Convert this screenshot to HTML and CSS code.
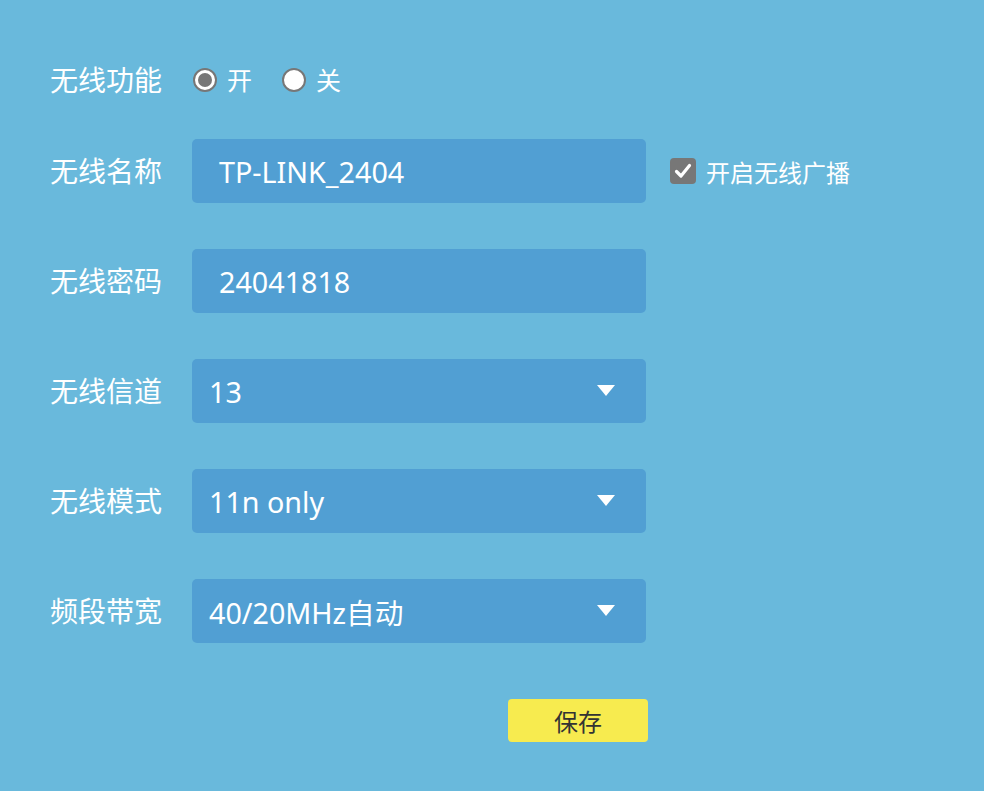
FILE: index.html
```html
<!DOCTYPE html>
<html lang="zh-CN">
<head>
<meta charset="utf-8">
<title>无线设置</title>
<link rel="stylesheet" href="styles.css">
</head>
<body>
<div class="page">
  <div class="row row-radio">
    <div class="label">无线功能</div>
    <div class="radios">
      <span class="radio checked"></span><span class="radio-text">开</span>
      <span class="radio"></span><span class="radio-text">关</span>
    </div>
  </div>
  <div class="row">
    <div class="label">无线名称</div>
    <div class="field text">TP-LINK_2404</div>
    <div class="check">
      <span class="box"><svg width="18" height="16" viewBox="0 0 18 16"><path d="M2.5 8.5 L7 13 L15.5 2.5" fill="none" stroke="#fff" stroke-width="3.2" stroke-linecap="round" stroke-linejoin="round"/></svg></span>
      <span class="check-text">开启无线广播</span>
    </div>
  </div>
  <div class="row">
    <div class="label">无线密码</div>
    <div class="field text">24041818</div>
  </div>
  <div class="row">
    <div class="label">无线信道</div>
    <div class="field select"><span>13</span><span class="arrow"></span></div>
  </div>
  <div class="row">
    <div class="label">无线模式</div>
    <div class="field select"><span>11n only</span><span class="arrow"></span></div>
  </div>
  <div class="row">
    <div class="label">频段带宽</div>
    <div class="field select"><span>40/20MHz自动</span><span class="arrow"></span></div>
  </div>
  <div class="actions">
    <button class="save">保存</button>
  </div>
</div>
</body>
</html>
```
FILE: styles.css
```css
html, body {
  margin: 0;
  padding: 0;
  background: #69b9dc;
  height: 100%;
}
body {
  font-family: "Noto Sans", "Noto Sans CJK SC", sans-serif;
  color: #fff;
}
.page {
  padding: 48px 0 0 50px;
  display: flex;
  flex-direction: column;
  gap: 46px;
}
.row {
  display: flex;
  align-items: center;
  height: 64px;
}
.row-radio {
  margin-bottom: -19px;
}
.label {
  width: 142px;
  font-family: "Noto Sans CJK SC", sans-serif;
  font-size: 28px;
  color: #fff;
  margin-top: -2px;
}
.radios {
  display: flex;
  align-items: center;
}
.radio {
  width: 20px;
  height: 20px;
  border: 2px solid #777;
  border-radius: 50%;
  background: #fff;
  box-sizing: content-box;
  position: relative;
  margin-left: 1px;
}
.radio.checked::after {
  content: "";
  position: absolute;
  left: 3px;
  top: 3px;
  width: 14px;
  height: 14px;
  border-radius: 50%;
  background: #777;
}
.radio-text {
  font-family: "Noto Sans CJK SC", sans-serif;
  font-size: 25px;
  margin-left: 10px;
  margin-right: 29px;
  margin-top: -2px;
}
.field {
  width: 454px;
  height: 64px;
  background: #519fd3;
  border-radius: 5px;
  box-sizing: border-box;
  display: flex;
  align-items: center;
  font-size: 28.7px;
  color: #fff;
}
.field.text {
  padding-left: 27px;
}
.field.select {
  padding-left: 17px;
  padding-right: 31px;
  justify-content: space-between;
}
.arrow {
  width: 0;
  height: 0;
  border-left: 9px solid transparent;
  border-right: 9px solid transparent;
  border-top: 11px solid #fff;
  margin-top: -2px;
}
.check {
  display: flex;
  align-items: center;
  margin-left: 24px;
}
.box {
  width: 26px;
  height: 26px;
  background: #777;
  border-radius: 4px;
  display: flex;
  align-items: center;
  justify-content: center;
}
.check-text {
  font-family: "Noto Sans CJK SC", sans-serif;
  font-size: 24px;
  margin-left: 10px;
}
.actions {
  padding-left: 458px;
  margin-top: 10px;
}
.save {
  width: 140px;
  height: 43px;
  border: none;
  border-radius: 4px;
  background: #f7eb4f;
  color: #333;
  font-family: "Noto Sans CJK SC", sans-serif;
  font-size: 24px;
  padding: 0;
}
```
